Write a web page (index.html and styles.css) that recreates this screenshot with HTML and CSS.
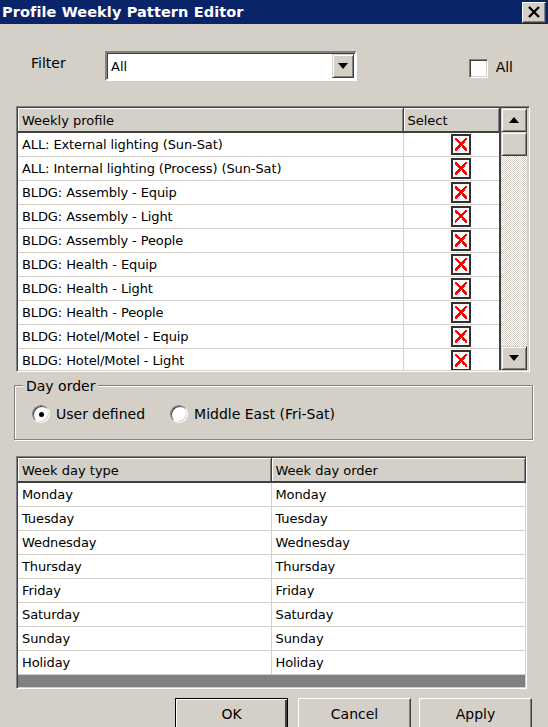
FILE: index.html
```html
<!DOCTYPE html>
<html>
<head>
<meta charset="utf-8">
<link rel="stylesheet" href="styles.css">
</head>
<body>
<div class="window">
  <div class="titlebar">
    <span class="title">Profile Weekly Pattern Editor</span>
    <span class="close-btn"><svg width="14" height="12" viewBox="0 0 14 12"><path d="M2 1 L12 11 M12 1 L2 11" stroke="#000" stroke-width="2.4"/></svg></span>
  </div>

  <div class="filter-row">
    <span class="filter-label">Filter</span>
    <div class="combo">
      <span class="combo-text">All</span>
      <span class="combo-btn"><svg width="10" height="6" viewBox="0 0 10 6"><path d="M0 0 H10 L5 6 Z" fill="#000"/></svg></span>
    </div>
    <span class="spacer"></span>
    <span class="checkbox"></span>
    <span class="check-label">All</span>
  </div>

  <div class="list-frame">
    <div class="list-grid">
      <table class="grid">
        <colgroup><col class="c-profile"><col class="c-select"></colgroup>
        <thead><tr><th>Weekly profile</th><th>Select</th></tr></thead>
        <tbody>
          <tr><td>ALL: External lighting (Sun-Sat)</td><td class="sel"><span class="xbox"></span></td></tr>
          <tr><td>ALL: Internal lighting (Process) (Sun-Sat)</td><td class="sel"><span class="xbox"></span></td></tr>
          <tr><td>BLDG: Assembly - Equip</td><td class="sel"><span class="xbox"></span></td></tr>
          <tr><td>BLDG: Assembly - Light</td><td class="sel"><span class="xbox"></span></td></tr>
          <tr><td>BLDG: Assembly - People</td><td class="sel"><span class="xbox"></span></td></tr>
          <tr><td>BLDG: Health - Equip</td><td class="sel"><span class="xbox"></span></td></tr>
          <tr><td>BLDG: Health - Light</td><td class="sel"><span class="xbox"></span></td></tr>
          <tr><td>BLDG: Health - People</td><td class="sel"><span class="xbox"></span></td></tr>
          <tr><td>BLDG: Hotel/Motel - Equip</td><td class="sel"><span class="xbox"></span></td></tr>
          <tr><td>BLDG: Hotel/Motel - Light</td><td class="sel"><span class="xbox"></span></td></tr>
        </tbody>
      </table>
    </div>
    <div class="vscroll">
      <span class="sb-btn"><svg width="10" height="6" viewBox="0 0 10 6"><path d="M0 6 H10 L5 0 Z" fill="#000"/></svg></span>
      <span class="sb-thumb"></span>
      <span class="sb-track"></span>
      <span class="sb-btn"><svg width="10" height="6" viewBox="0 0 10 6"><path d="M0 0 H10 L5 6 Z" fill="#000"/></svg></span>
    </div>
  </div>

  <div class="dayorder">
    <span class="legend">Day order</span>
    <div class="radios">
      <span class="radio checked"></span><span class="radio-label">User defined</span>
      <span class="radio"></span><span class="radio-label last">Middle East (Fri-Sat)</span>
    </div>
  </div>

  <div class="day-frame">
    <table class="grid daygrid">
      <colgroup><col class="c-type"><col class="c-order"></colgroup>
      <thead><tr><th>Week day type</th><th>Week day order</th></tr></thead>
      <tbody>
        <tr><td>Monday</td><td>Monday</td></tr>
        <tr><td>Tuesday</td><td>Tuesday</td></tr>
        <tr><td>Wednesday</td><td>Wednesday</td></tr>
        <tr><td>Thursday</td><td>Thursday</td></tr>
        <tr><td>Friday</td><td>Friday</td></tr>
        <tr><td>Saturday</td><td>Saturday</td></tr>
        <tr><td>Sunday</td><td>Sunday</td></tr>
        <tr><td>Holiday</td><td>Holiday</td></tr>
      </tbody>
    </table>
    <div class="filler"></div>
  </div>

  <div class="buttons">
    <span class="btn default">OK</span>
    <span class="btn">Cancel</span>
    <span class="btn">Apply</span>
  </div>
</div>
</body>
</html>
```

FILE: styles.css
```css
* { box-sizing: border-box; }
html, body { margin: 0; padding: 0; }
body {
  width: 548px;
  height: 727px;
  overflow: hidden;
  background: #d4d0c8;
  font-family: "DejaVu Sans", Tahoma, sans-serif;
  font-size: 13px;
  color: #000;
}
.window { width: 548px; height: 727px; }

.titlebar {
  height: 24px;
  background: #0a246a;
  display: flex;
  align-items: center;
  padding: 0 2px 0 2px;
}
.title {
  color: #fff;
  font-weight: bold;
  font-size: 14.5px;
  flex: 1;
  letter-spacing: 0.1px;
}
.close-btn {
  width: 24px;
  height: 21px;
  background: #d4d0c8;
  border-top: 1px solid #fff;
  border-left: 1px solid #fff;
  border-right: 1px solid #404040;
  border-bottom: 1px solid #404040;
  box-shadow: inset -1px -1px 0 #808080;
  display: flex;
  align-items: center;
  justify-content: center;
}

.filter-row {
  margin-top: 27px;
  height: 30px;
  display: flex;
  align-items: center;
  padding-left: 31px;
  padding-right: 35px;
}
.filter-label { width: 74px; margin-top: -6px; font-size: 14px; }
.combo {
  width: 252px;
  height: 30px;
  background: #fff;
  border-top: 2px solid #808080;
  border-left: 2px solid #808080;
  border-right: 2px solid #fff;
  border-bottom: 2px solid #fff;
  box-shadow: inset 1px 1px 0 #404040;
  display: flex;
  align-items: center;
  padding: 0 1px 0 4px;
}
.combo-text { flex: 1; padding-top: 1px; }
.combo-btn {
  width: 22px;
  height: 24px;
  background: #d4d0c8;
  border-top: 1px solid #d4d0c8;
  border-left: 1px solid #d4d0c8;
  border-right: 1px solid #404040;
  border-bottom: 1px solid #404040;
  box-shadow: inset 1px 1px 0 #fff, inset -1px -1px 0 #808080;
  display: flex;
  align-items: center;
  justify-content: center;
}
.spacer { flex: 1; }
.checkbox {
  width: 19px;
  height: 19px;
  background: #fff;
  border-top: 1px solid #808080;
  border-left: 1px solid #808080;
  border-right: 1px solid #fff;
  border-bottom: 1px solid #fff;
  box-shadow: inset 1px 1px 0 #404040, inset -1px -1px 0 #d4d0c8;
  margin-top: 5px;
}
.check-label { margin-left: 8px; margin-top: 2px; font-size: 14px; }

.list-frame {
  margin: 25px 0 0 16px;
  width: 514px;
  height: 266px;
  border-top: 1px solid #808080;
  border-left: 1px solid #808080;
  border-right: 1px solid #fff;
  border-bottom: 1px solid #fff;
  box-shadow: inset 1px 1px 0 #404040, inset -1px -1px 0 #d4d0c8;
  padding: 1px;
  display: flex;
  overflow: hidden;
}
.list-grid {
  width: 483px;
  height: 262px;
  background: #fff;
  overflow: hidden;
  border-right: 2px solid #404040;
}
.grid {
  border-collapse: collapse;
  table-layout: fixed;
  width: 100%;
}
.c-profile { width: 385px; }
.c-select { width: 96px; }
.grid th {
  height: 24px;
  padding: 1px 4px 0 4px;
  text-align: left;
  font-weight: normal;
  background: #d4d0c8;
  border-right: 1px solid #404040;
  border-bottom: 2px solid #404040;
  box-shadow: inset 1px 1px 0 #fff, inset -1px 0 0 #808080;
  white-space: nowrap;
  overflow: hidden;
}
.grid td {
  height: 24px;
  padding: 1px 4px 0 4px;
  border-right: 1px solid #d4d0c8;
  border-bottom: 1px solid #d4d0c8;
  white-space: nowrap;
  overflow: hidden;
  vertical-align: middle;
  letter-spacing: -0.1px;
}
.grid td.sel { text-align: center; padding: 0; }
.xbox {
  display: inline-block;
  width: 20px;
  height: 21px;
  vertical-align: middle;
  border: 2px solid #303030;
  background:
    linear-gradient(45deg, transparent 44%, #ff0000 44%, #ff0000 58%, transparent 58%),
    linear-gradient(-45deg, transparent 44%, #ff0000 44%, #ff0000 58%, transparent 58%),
    #fff;
  background-size: 12px 13px, 12px 13px, auto;
  background-position: center, center, center;
  background-repeat: no-repeat;
  margin-left: 20px;
}

.vscroll {
  width: 26px;
  height: 262px;
  display: flex;
  flex-direction: column;
}
.sb-btn, .sb-thumb {
  height: 24px;
  flex: none;
  background: #d4d0c8;
  border-top: 1px solid #d4d0c8;
  border-left: 1px solid #d4d0c8;
  border-right: 1px solid #404040;
  border-bottom: 1px solid #404040;
  box-shadow: inset 1px 1px 0 #fff, inset -1px -1px 0 #808080;
  display: flex;
  align-items: center;
  justify-content: center;
}
.sb-track {
  flex: 1;
  background-color: #fff;
  background-image:
    linear-gradient(45deg, #d4d0c8 25%, transparent 25%, transparent 75%, #d4d0c8 75%),
    linear-gradient(45deg, #d4d0c8 25%, transparent 25%, transparent 75%, #d4d0c8 75%);
  background-size: 2px 2px;
  background-position: 0 0, 1px 1px;
}

.dayorder {
  position: relative;
  margin: 13px 0 0 14px;
  width: 519px;
  height: 55px;
  border: 1px solid #808080;
  box-shadow: 1px 1px 0 #fff, inset 1px 1px 0 #fff;
  padding: 19px 0 0 17px;
}
.legend {
  position: absolute;
  left: 8px;
  top: -8px;
  padding: 0 3px;
  background: #d4d0c8;
  font-size: 14px;
}
.radios { display: flex; align-items: center; }
.radio {
  width: 18px;
  height: 18px;
  border-radius: 50%;
  background: #fff;
  border: 1px solid;
  border-color: #808080 #fff #fff #808080;
  box-shadow: inset 1px 1px 0 #404040, inset -1px -1px 0 #d4d0c8;
  position: relative;
}
.radio.checked::after {
  content: "";
  position: absolute;
  left: 6px;
  top: 6px;
  width: 5px;
  height: 5px;
  border-radius: 50%;
  background: #000;
}
.radio-label { margin-left: 6px; margin-right: 25px; font-size: 14px; }
.radio-label.last { margin-right: 0; white-space: nowrap; }

.day-frame {
  margin: 16px 0 0 16px;
  width: 511px;
  height: 233px;
  border-top: 1px solid #808080;
  border-left: 1px solid #808080;
  border-right: 1px solid #fff;
  border-bottom: 1px solid #fff;
  box-shadow: inset 1px 1px 0 #404040, inset -1px -1px 0 #d4d0c8;
  padding: 1px 1px 2px 1px;
  display: flex;
  flex-direction: column;
  background: #808080;
}
.daygrid { background: #fff; flex: none; }
.c-type { width: 253px; }
.c-order { width: 254px; }
.filler { flex: 1; background: #808080; }

.buttons {
  margin-top: 9px;
  display: flex;
  justify-content: flex-end;
  gap: 8px;
  padding-right: 16px;
}
.btn {
  width: 113px;
  height: 34px;
  background: #d4d0c8;
  border-top: 1px solid #fff;
  border-left: 1px solid #fff;
  border-right: 1px solid #404040;
  border-bottom: 1px solid #404040;
  box-shadow: inset -1px -1px 0 #808080;
  display: flex;
  align-items: center;
  justify-content: center;
  font-size: 14px;
  padding-bottom: 2px;
}
.btn.default {
  border: 1px solid #000;
  box-shadow: inset 1px 1px 0 #fff, inset -2px -2px 0 #404040;
  margin-right: 2px;
}
```
